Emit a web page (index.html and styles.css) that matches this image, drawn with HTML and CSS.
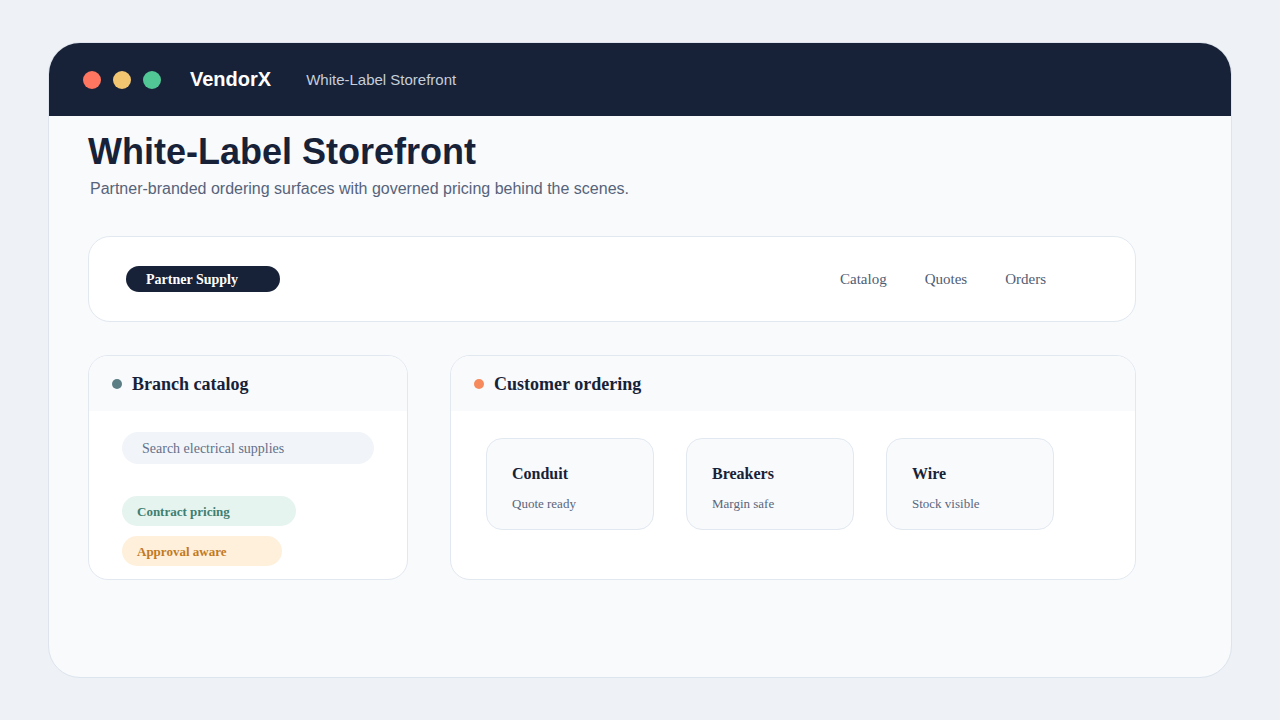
FILE: index.html
```html
<!DOCTYPE html>
<html lang="en">
<head>
    <meta charset="UTF-8">
    <meta name="viewport" content="width=device-width, initial-scale=1.0">
    <title>VendorX - White-Label Storefront</title>
    <link rel="stylesheet" href="styles.css">
</head>
<body>
    <div class="window">
        <header class="titlebar">
            <div class="lights">
                <span class="light red"></span>
                <span class="light yellow"></span>
                <span class="light green"></span>
            </div>
            <span class="brand">VendorX</span>
            <span class="crumb">White-Label Storefront</span>
        </header>

        <main class="content">
            <h1 class="page-title">White-Label Storefront</h1>
            <p class="page-sub">Partner-branded ordering surfaces with governed pricing behind the scenes.</p>

            <!-- partner branded top bar -->
            <div class="storebar">
                <span class="partner-pill">Partner Supply</span>
                <nav class="store-nav">
                    <a href="#">Catalog</a>
                    <a href="#">Quotes</a>
                    <a href="#">Orders</a>
                </nav>
            </div>

            <div class="panels">
                <section class="panel">
                    <div class="panel-head">
                        <span class="dot dot-teal"></span>
                        <h2>Branch catalog</h2>
                    </div>
                    <div class="panel-body catalog-body">
                        <div class="search">Search electrical supplies</div>
                        <div class="chips">
                            <span class="chip chip-green">Contract pricing</span>
                            <span class="chip chip-amber">Approval aware</span>
                        </div>
                    </div>
                </section>

                <section class="panel">
                    <div class="panel-head">
                        <span class="dot dot-orange"></span>
                        <h2>Customer ordering</h2>
                    </div>
                    <div class="panel-body order-body">
                        <div class="item">
                            <h3>Conduit</h3>
                            <p>Quote ready</p>
                        </div>
                        <div class="item">
                            <h3>Breakers</h3>
                            <p>Margin safe</p>
                        </div>
                        <div class="item">
                            <h3>Wire</h3>
                            <p>Stock visible</p>
                        </div>
                    </div>
                </section>
            </div>
        </main>
    </div>
</body>
</html>
```

FILE: styles.css
```css
* {
    box-sizing: border-box;
}

body {
    margin: 0;
    height: 720px;
    background-color: #eef2f6;
    font-family: "Liberation Serif", serif;
    display: flex;
    align-items: center;
    justify-content: center;
}

.window {
    width: 1184px;
    height: 636px;
    background-color: #f8fafc;
    border: 1px solid #dde4ed;
    border-radius: 32px;
    overflow: hidden;
    display: flex;
    flex-direction: column;
}

/* dark title bar */
.titlebar {
    height: 73px;
    background-color: #172238;
    display: flex;
    align-items: center;
    padding: 0 0 0 34px;
    font-family: "Liberation Sans", Arial, sans-serif;
    flex-shrink: 0;
}

.lights {
    display: flex;
    gap: 12px;
}

.light {
    width: 18px;
    height: 18px;
    border-radius: 50%;
}

.red { background-color: #fe7560; }
.yellow { background-color: #f2c671; }
.green { background-color: #52c796; }

.brand {
    margin-left: 29px;
    color: #fff;
    font-size: 20px;
    font-weight: bold;
}

.crumb {
    margin-left: 35px;
    color: #c5cedb;
    font-size: 15px;
}

.content {
    padding: 14px 95px 0 39px;
}

.page-title {
    margin: 0;
    font-family: "Liberation Sans", Arial, sans-serif;
    font-size: 36px;
    line-height: 43px;
    color: #172238;
}

.page-sub {
    margin: 5px 0 0 2px;
    font-family: "Liberation Sans", Arial, sans-serif;
    font-size: 16px;
    line-height: 21px;
    color: #56637a;
}

.storebar {
    margin-top: 37px;
    height: 86px;
    background-color: #fff;
    border: 1px solid #e2e8f0;
    border-radius: 22px;
    display: flex;
    align-items: center;
    justify-content: space-between;
    padding: 0 89px 0 37px;
}

.partner-pill {
    width: 154px;
    height: 26px;
    line-height: 27px;
    padding-left: 20px;
    border-radius: 13px;
    background-color: #172238;
    color: #fff;
    font-size: 14px;
    font-weight: bold;
}

.store-nav {
    display: flex;
    gap: 38px;
}

.store-nav a {
    color: #4f5d74;
    font-size: 15px;
    text-decoration: none;
}

.panels {
    margin-top: 33px;
    display: grid;
    grid-template-columns: 320px 1fr;
    gap: 42px;
}

.panel {
    background-color: #fff;
    border: 1px solid #e2e8f0;
    border-radius: 20px;
    overflow: hidden;
}

.panel-head {
    height: 55px;
    background-color: #f8fafc;
    display: flex;
    align-items: center;
    gap: 10px;
    padding: 1px 0 0 23px;
}

.panel-head h2 {
    margin: 0;
    font-size: 18px;
    color: #172238;
}

.dot {
    width: 10px;
    height: 10px;
    border-radius: 50%;
}

.dot-teal { background-color: #5b7d84; }
.dot-orange { background-color: #f78a5c; }

.catalog-body {
    padding: 21px 33px 13px;
}

.search {
    height: 32px;
    line-height: 34px;
    border-radius: 16px;
    background-color: #f1f5f9;
    padding-left: 20px;
    color: #64708a;
    font-size: 14px;
}

.chips {
    margin-top: 32px;
    display: flex;
    flex-direction: column;
    align-items: flex-start;
    gap: 10px;
}

.chip {
    height: 30px;
    line-height: 31px;
    border-radius: 15px;
    padding-left: 15px;
    font-size: 13px;
    font-weight: bold;
}

.chip-green {
    width: 174px;
    background-color: #e6f4f0;
    color: #3f7f70;
}

.chip-amber {
    width: 160px;
    background-color: #fff0dc;
    color: #c27a1e;
}

.order-body {
    padding: 27px 35px;
    display: flex;
    gap: 32px;
}

.item {
    width: 168px;
    height: 92px;
    background-color: #f8fafc;
    border: 1px solid #e2e8f0;
    border-radius: 16px;
    padding: 25px 25px 0;
}

.item h3 {
    margin: 0;
    font-size: 16px;
    line-height: 19px;
    color: #172238;
}

.item p {
    margin: 13px 0 0;
    font-size: 13px;
    line-height: 16px;
    color: #5a667d;
}
```
